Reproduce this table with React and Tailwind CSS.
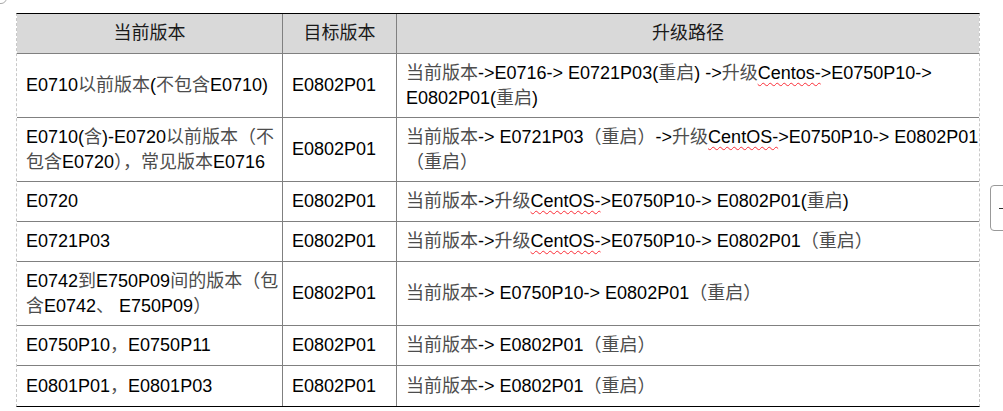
import React from 'react';

const rows = [
  { h: 'h-[64px]', from: 'E0710以前版本(不包含E0710)', to: 'E0802P01', path: '当前版本->E0716-> E0721P03(重启) ->升级[Centos-]>E0750P10->\nE0802P01(重启)' },
  { h: 'h-[64px]', from: 'E0710(含)-E0720以前版本（不\n包含E0720），常见版本E0716', to: 'E0802P01', path: '当前版本-> E0721P03（重启）->升级[CentOS-]>E0750P10-> E0802P01\n（重启）' },
  { h: 'h-[40px]', from: 'E0720', to: 'E0802P01', path: '当前版本->升级[CentOS-]>E0750P10-> E0802P01(重启)' },
  { h: 'h-[40px]', from: 'E0721P03', to: 'E0802P01', path: '当前版本->升级[CentOS-]>E0750P10-> E0802P01（重启）' },
  { h: 'h-[64px]', from: 'E0742到E750P09间的版本（包\n含E0742、 E750P09）', to: 'E0802P01', path: '当前版本-> E0750P10-> E0802P01（重启）' },
  { h: 'h-[40px]', from: 'E0750P10，E0750P11', to: 'E0802P01', path: '当前版本-> E0802P01（重启）' },
  { h: 'h-[40px]', from: 'E0801P01，E0801P03', to: 'E0802P01', path: '当前版本-> E0802P01（重启）', last: true },
];

// CJK runs get the lighter grey the source document shows
function Runs({ text }) {
  const parts = text.split(/([\u3000-\u303f\u4e00-\u9fff\uff00-\uffef]+)/);
  return parts.map((p, i) =>
    /[\u3000-\u303f\u4e00-\u9fff\uff00-\uffef]/.test(p)
      ? <span key={i} className="text-[#4d4d4d]">{p}</span>
      : <span key={i}>{p}</span>
  );
}

function Rich({ text }) {
  return text.split('\n').map((line, li) => (
    <div key={li} className="whitespace-pre">
      {line.split(/(\[[^\]]+\])/).map((seg, si) =>
        seg.startsWith('[') ? (
          <span key={si} className="underline decoration-wavy decoration-red-500 decoration-1 underline-offset-[3px]">
            {seg.slice(1, -1)}
          </span>
        ) : (
          <Runs key={si} text={seg} />
        )
      )}
    </div>
  ));
}

export default function App() {
  return (
    <div className="relative w-[1003px] h-[411px] overflow-hidden bg-white font-['Liberation_Sans','Noto_Sans_CJK_SC',sans-serif] text-[18px] text-black">
      {/* corner of the neighbouring frame */}
      <div className="absolute -left-[20px] -top-[20px] w-[27px] h-[24px] border border-[#aaa] rounded-[6px]" />
      {/* side handle */}
      <div className="absolute left-[990px] top-[185px] w-[30px] h-[46px] border border-[#999] rounded-[4px]">
        <div className="absolute left-[8px] top-[22px] w-[5px] h-[1px] bg-[#333]" />
      </div>

      <div className="pt-[13px] pl-[16px]">
        <div className="w-[964px] border-t border-b border-t-black border-b-black border-x border-x-[#c8c8c8] border-dashed [border-top-style:solid] [border-bottom-style:solid]">
          <div className="grid grid-cols-[266px_114px_582px] h-[40px] bg-[#d9d9d9] border-b border-[#808080] text-[#1a1a1a]">
            <div className="flex items-center justify-center border-r border-[#808080]">当前版本</div>
            <div className="flex items-center justify-center border-r border-[#808080]">目标版本</div>
            <div className="flex items-center justify-center">升级路径</div>
          </div>
          {rows.map((r, i) => (
            <div key={i} className={`grid grid-cols-[266px_114px_582px] ${r.h} ${r.last ? '' : 'border-b border-[#808080]'}`}>
              <div className="flex flex-col justify-center pl-[9px] leading-[25px] border-r border-[#808080]">
                <Rich text={r.from} />
              </div>
              <div className="flex flex-col justify-center pl-[9px] leading-[25px] border-r border-[#808080]">
                <Rich text={r.to} />
              </div>
              <div className="flex flex-col justify-center pl-[9px] leading-[25px]">
                <Rich text={r.path} />
              </div>
            </div>
          ))}
        </div>
      </div>
    </div>
  );
}
